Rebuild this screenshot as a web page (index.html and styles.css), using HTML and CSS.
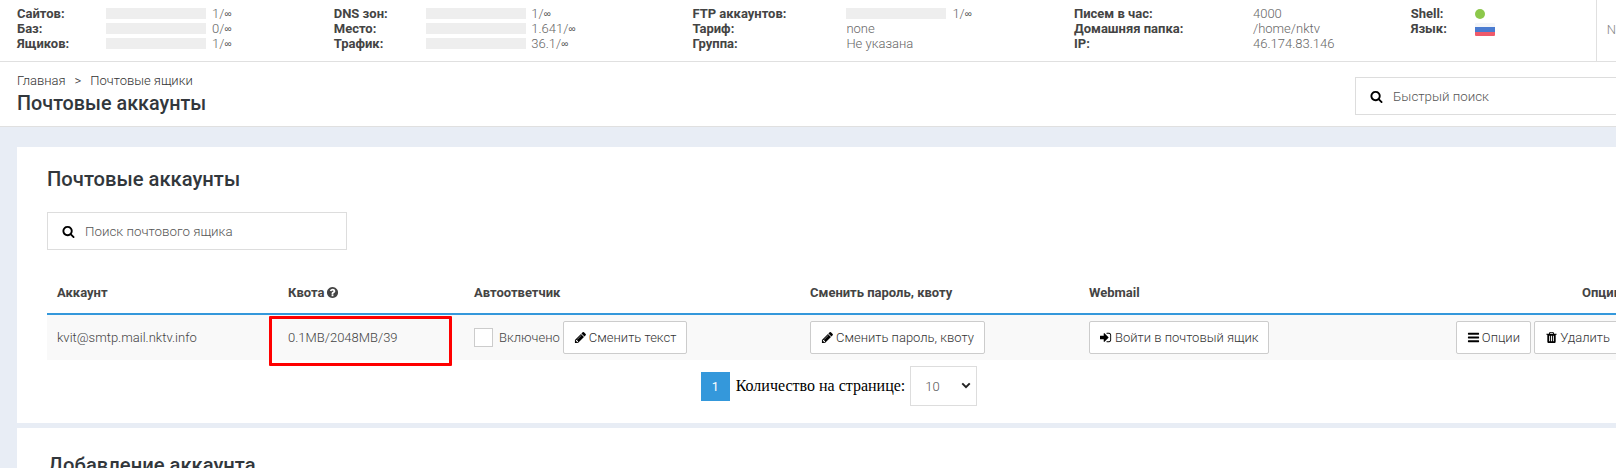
FILE: index.html
```html
<!DOCTYPE html>
<html>
  <head>
    <meta charset="UTF-8">
    <title>Почтовые аккаунты</title>
    <link rel="stylesheet" href="styles.css">
  </head>
  <body>
    <svg class="iconDefs" xmlns="http://www.w3.org/2000/svg">
      <symbol id="iSearch" viewBox="0 0 1792 1792"><path d="M1216 832q0-185-131.5-316.5t-316.5-131.5-316.5 131.5-131.5 316.5 131.5 316.5 316.5 131.5 316.5-131.5 131.5-316.5zm512 832q0 52-38 90t-90 38q-54 0-90-38l-343-342q-179 124-399 124-143 0-273.5-55.5t-225-150-150-225-55.5-273.5 55.5-273.5 150-225 225-150 273.5-55.5 273.5 55.5 225 150 150 225 55.5 273.5q0 220-124 399l343 343q37 37 37 90z"/></symbol>
      <symbol id="iPencil" viewBox="0 0 1792 1792"><path d="M491 1536l91-91-235-235-91 91v107h128v128h107zm523-928q0-22-22-22-10 0-17 7l-542 542q-7 7-7 17 0 22 22 22 10 0 17-7l542-542q7-7 7-17zm-54-192l416 416-832 832h-416v-416zm683 96q0 53-37 90l-166 166-416-416 166-165q36-38 90-38 53 0 91 38l235 234q37 39 37 91z"/></symbol>
      <symbol id="iSignIn" viewBox="0 0 1792 1792"><path d="M1184 896q0 26-19 45l-544 544q-19 19-45 19t-45-19-19-45v-288h-448q-26 0-45-19t-19-45v-384q0-26 19-45t45-19h448v-288q0-26 19-45t45-19 45 19l544 544q19 19 19 45zm352-352v704q0 119-84.5 203.5t-203.5 84.5h-320q-13 0-22.5-9.5t-9.5-22.5q0-4-1-20t-.5-26.5 3-23.5 10-19.5 20.5-6.5h320q66 0 113-47t47-113v-704q0-66-47-113t-113-47h-312l-11.5-1-11.5-3-8-5.5-7-9-2-13.5q0-4-1-20t-.5-26.5 3-23.5 10-19.5 20.5-6.5h320q119 0 203.5 84.5t84.5 203.5z"/></symbol>
      <symbol id="iBars" viewBox="0 0 1792 1792"><path d="M1664 1344v128q0 26-19 45t-45 19h-1408q-26 0-45-19t-19-45v-128q0-26 19-45t45-19h1408q26 0 45 19t19 45zm0-512v128q0 26-19 45t-45 19h-1408q-26 0-45-19t-19-45v-128q0-26 19-45t45-19h1408q26 0 45 19t19 45zm0-512v128q0 26-19 45t-45 19h-1408q-26 0-45-19t-19-45v-128q0-26 19-45t45-19h1408q26 0 45 19t19 45z"/></symbol>
      <symbol id="iTrash" viewBox="0 0 1792 1792"><path d="M704 1376v-704q0-14-9-23t-23-9h-64q-14 0-23 9t-9 23v704q0 14 9 23t23 9h64q14 0 23-9t9-23zm256 0v-704q0-14-9-23t-23-9h-64q-14 0-23 9t-9 23v704q0 14 9 23t23 9h64q14 0 23-9t9-23zm256 0v-704q0-14-9-23t-23-9h-64q-14 0-23 9t-9 23v704q0 14 9 23t23 9h64q14 0 23-9t9-23zm-544-992h448l-48-117q-7-9-17-11h-317q-10 2-17 11zm928 32v64q0 14-9 23t-23 9h-96v948q0 83-47 143.5t-113 60.5h-832q-66 0-113-58.5t-47-141.5v-952h-96q-14 0-23-9t-9-23v-64q0-14 9-23t23-9h309l70-167q15-37 54-63t79-26h320q40 0 79 26t54 63l70 167h309q14 0 23 9t9 23z"/></symbol>
      <symbol id="iQuestion" viewBox="0 0 1792 1792"><path d="M1024 1376v-192q0-14-9-23t-23-9h-192q-14 0-23 9t-9 23v192q0 14 9 23t23 9h192q14 0 23-9t9-23zm256-672q0-88-55.5-163t-138.5-116-170-41q-243 0-371 213-15 24 8 42l132 100q7 6 19 6 16 0 25-12 53-68 86-92 34-24 86-24 48 0 85.5 26t37.5 59q0 38-20 61t-68 45q-63 28-115.5 86.5t-52.5 125.5v36q0 14 9 23t23 9h192q14 0 23-9t9-23q0-19 21.5-49.5t54.5-49.5q32-18 49-28.5t46-35 44.5-48 28-60.5 12.5-81zm384 192q0 209-103 385.5t-279.5 279.5-385.5 103-385.5-103-279.5-279.5-103-385.5 103-385.5 279.5-279.5 385.5-103 385.5 103 279.5 279.5 103 385.5z"/></symbol>
    </svg>

    <div class="statBar">
      <div class="statGroup statGroupSites">
        <b>Сайтов:</b><span class="statValue"><i class="statTrack"></i>1/<em class="inf">∞</em></span>
        <b>Баз:</b><span class="statValue"><i class="statTrack"></i>0/<em class="inf">∞</em></span>
        <b>Ящиков:</b><span class="statValue"><i class="statTrack"></i>1/<em class="inf">∞</em></span>
      </div>
      <div class="statGroup statGroupDns">
        <b>DNS зон:</b><span class="statValue"><i class="statTrack"></i>1/<em class="inf">∞</em></span>
        <b>Место:</b><span class="statValue"><i class="statTrack"></i>1.641/<em class="inf">∞</em></span>
        <b>Трафик:</b><span class="statValue"><i class="statTrack"></i>36.1/<em class="inf">∞</em></span>
      </div>
      <div class="statGroup statGroupFtp">
        <b>FTP аккаунтов:</b><span class="statValue"><i class="statTrack"></i>1/<em class="inf">∞</em></span>
        <b>Тариф:</b><span class="statValue">none</span>
        <b>Группа:</b><span class="statValue">Не указана</span>
      </div>
      <div class="statGroup statGroupMail">
        <b>Писем в час:</b><span class="statValue">4000</span>
        <b>Домашняя папка:</b><span class="statValue">/home/nktv</span>
        <b>IP:</b><span class="statValue">46.174.83.146</span>
      </div>
      <div class="statGroup statGroupShell">
        <b>Shell:</b><span class="statValue"><i class="shellDot"></i></span>
        <b>Язык:</b><span class="statValue"><i class="flagRu"></i></span>
      </div>
      <div class="statUser">N</div>
    </div>

    <div class="pageHead">
      <div>
        <div class="crumbs">Главная<span class="crumbSep">&gt;</span>Почтовые ящики</div>
        <h1 class="pageTitle">Почтовые аккаунты</h1>
      </div>
      <label class="searchBox quickSearch">
        <svg class="icon searchIcon"><use href="#iSearch"/></svg>
        <input type="text" placeholder="Быстрый поиск">
      </label>
    </div>

    <div class="content">
      <div class="card">
        <h2 class="cardTitle">Почтовые аккаунты</h2>
        <label class="searchBox mailSearch">
          <svg class="icon searchIcon"><use href="#iSearch"/></svg>
          <input type="text" placeholder="Поиск почтового ящика">
        </label>

        <table class="mailTable">
          <thead>
            <tr>
              <th class="colAccount">Аккаунт</th>
              <th class="colQuota">Квота <svg class="icon helpIcon"><use href="#iQuestion"/></svg></th>
              <th class="colReply">Автоответчик</th>
              <th class="colPass">Сменить пароль, квоту</th>
              <th class="colMail">Webmail</th>
              <th class="colOptions">Опции</th>
            </tr>
          </thead>
          <tbody>
            <tr>
              <td>kvit@smtp.mail.nktv.info</td>
              <td class="quotaCell">0.1MB/2048MB/39<div class="redMark"></div></td>
              <td>
                <div class="replyCell">
                  <input type="checkbox" class="check"> <span>Включено</span>
                  <button class="button"><svg class="icon"><use href="#iPencil"/></svg>Сменить текст</button>
                </div>
              </td>
              <td><button class="button"><svg class="icon"><use href="#iPencil"/></svg>Сменить пароль, квоту</button></td>
              <td><button class="button"><svg class="icon"><use href="#iSignIn"/></svg>Войти в почтовый ящик</button></td>
              <td class="optionsCell">
                <button class="button"><svg class="icon"><use href="#iBars"/></svg>Опции</button>
                <button class="button"><svg class="icon"><use href="#iTrash"/></svg>Удалить</button>
              </td>
            </tr>
          </tbody>
        </table>

        <div class="pager">
          <span class="pageNum">1</span>
          <span class="pagerLabel">Количество на странице:</span>
          <div class="pagerSelectWrap">
            <select class="pagerSelect"><option>10</option><option>25</option><option>50</option></select>
            <svg class="pagerArrow" viewBox="0 0 12 8"><polyline points="1.5,1.5 6,6 10.5,1.5"/></svg>
          </div>
        </div>
      </div>

      <div class="card cardNext">
        <h2 class="cardTitle">Добавление аккаунта</h2>
      </div>
    </div>
  </body>
</html>
```

FILE: styles.css
```css
* {
  box-sizing: border-box;
}

html, body {
  height: 468px;
  overflow: hidden;
}

body {
  margin: 0;
  width: 1616px;
  background-color: #e8edf5;
  font-family: Roboto, "Liberation Sans", sans-serif;
  font-size: 13px;
  color: #444;
}

.iconDefs {
  display: none;
}

.icon {
  width: 14px;
  height: 14px;
  fill: #000;
  flex: none;
}

/* top stats */
.statBar {
  display: flex;
  height: 62px;
  padding: 6px 0 0 17px;
  background-color: #fff;
  border-bottom: 1px solid #e0e0e0;
  font-size: 13px;
  line-height: 15px;
}

.statGroup {
  display: grid;
  align-content: start;
}

.statGroup b {
  font-weight: 700;
}

.statGroupSites { width: 317.5px; grid-template-columns: 89px 1fr; }
.statGroupDns { width: 359.5px; grid-template-columns: 92.5px 1fr; }
.statGroupFtp { width: 382.5px; grid-template-columns: 154px 1fr; }
.statGroupMail { width: 337.5px; grid-template-columns: 179px 1fr; }
.statGroupShell { width: 185.5px; grid-template-columns: 64px 1fr; }

.statValue {
  display: flex;
  align-items: center;
  color: #666;
  font-weight: 300;
  white-space: nowrap;
}

.inf {
  font-family: "Liberation Sans", sans-serif;
  font-style: normal;
  font-weight: 400;
  font-size: 10px;
  color: #555;
}

.statTrack {
  width: 100px;
  height: 11px;
  margin-right: 6px;
  background-color: #eee;
}

.statGroupDns .statTrack {
  margin-right: 5px;
}

.shellDot {
  width: 10px;
  height: 10px;
  border-radius: 50%;
  background-color: #8cc84b;
}

.flagRu {
  width: 20px;
  height: 13px;
  margin-top: 1px;
  border-radius: 1px;
  background: linear-gradient(#f3f5f9 0 33%, #4a7bd0 33% 66%, #ef5a6b 66%);
}

.statUser {
  flex: 1;
  height: 61px;
  margin-top: -6px;
  padding: 22px 0 0 10px;
  border-left: 1px solid #e0e0e0;
  color: #888;
  font-weight: 300;
}

/* page head */
.pageHead {
  display: flex;
  justify-content: space-between;
  height: 65px;
  padding: 11px 0 0 17px;
  background-color: #fff;
  border-bottom: 1px solid #e0e0e0;
}

.crumbs {
  font-size: 13px;
  line-height: 16px;
  font-weight: 300;
  color: #333;
}

.crumbSep {
  margin: 0 9px;
}

.pageTitle {
  margin: 3px 0 0;
  font-size: 19.8px;
  line-height: 24px;
  font-weight: 500;
  color: #32373c;
}

.searchBox {
  display: flex;
  align-items: center;
  height: 38px;
  border: 1px solid #ddd;
  background-color: #fff;
}

.searchBox input {
  flex: 1;
  min-width: 0;
  border: none;
  outline: none;
  padding: 0;
  font-family: inherit;
  font-size: 13.33px;
  font-weight: 300;
  background: none;
}

.searchBox input::placeholder {
  color: #555;
}

.searchIcon {
  width: 13px;
  height: 13px;
  margin: 0 10px 0 14px;
}

.quickSearch {
  width: 270px;
  margin: 4px -9px 0 0;
}

/* cards */
.content {
  padding: 20px 0 0 17px;
}

.card {
  width: 1640px;
  height: 276px;
  padding: 20px 0 0 30px;
  background-color: #fff;
}

.cardNext {
  margin-top: 5px;
  padding-left: 31px;
  padding-top: 25px;
}

.cardTitle {
  margin: 0;
  font-size: 20.2px;
  line-height: 24px;
  font-weight: 500;
  color: #32373c;
}

.mailSearch {
  width: 300px;
  margin-top: 21px;
}

/* table */
.mailTable {
  width: 1584px;
  margin-top: 22px;
  table-layout: fixed;
  border-collapse: collapse;
  font-size: 13px;
}

.mailTable th {
  height: 42px;
  padding: 0 10px;
  text-align: left;
  font-weight: 700;
  font-size: 13px;
  border-bottom: 2px solid #3498db;
}

.colAccount { width: 231px; }
.colQuota { width: 186px; }
.colReply { width: 336px; }
.colPass { width: 279px; }
.colMail { width: 352px; }
.mailTable th.colOptions { text-align: right; }

.helpIcon {
  width: 13px;
  height: 13px;
  margin-left: -2px;
  fill: #444;
  vertical-align: -2px;
}

.mailTable td {
  height: 46px;
  padding: 0 10px;
  background-color: #f9f9f9;
  font-weight: 300;
  white-space: nowrap;
}

.quotaCell {
  position: relative;
}

.redMark {
  position: absolute;
  left: -9px;
  top: 1px;
  width: 183px;
  height: 50px;
  border: 3px solid #f00;
  border-radius: 1px;
}

.replyCell {
  display: flex;
  align-items: center;
}

.check {
  appearance: none;
  width: 19px;
  height: 19px;
  margin: 0 6px 0 0;
  border: 1px solid #ccc;
  background-color: #fff;
}

.replyCell .button {
  margin-left: 3px;
}

.button {
  display: inline-flex;
  align-items: center;
  gap: 2px;
  height: 33px;
  padding: 0 10px;
  border: 1px solid #ccc;
  border-radius: 2px;
  background-color: #fff;
  font-family: inherit;
  font-size: 13px;
  font-weight: 300;
  color: #333;
  cursor: pointer;
}

.button .icon {
  width: 13px;
  height: 13px;
}

.optionsCell {
  text-align: right;
}

/* pagination */
.pager {
  display: flex;
  justify-content: center;
  align-items: center;
  width: 1584px;
  margin-top: 6px;
  font-family: "Liberation Serif", serif;
  font-size: 16px;
  color: #000;
}

.pageNum {
  width: 29px;
  height: 29px;
  line-height: 29px;
  text-align: center;
  background-color: #3498db;
  color: #fff;
  font-family: Roboto, sans-serif;
  font-size: 12.5px;
}

.pagerLabel {
  margin: 0 5px 0 6px;
}

.pagerSelectWrap {
  position: relative;
  display: flex;
}

.pagerSelect {
  appearance: none;
  width: 67px;
  height: 40px;
  padding-left: 14px;
  border: 1px solid #ddd;
  border-radius: 0;
  background-color: #fff;
  font-family: Roboto, sans-serif;
  font-size: 13px;
  font-weight: 300;
  color: #555;
  outline: none;
}

.pagerArrow {
  position: absolute;
  right: 6px;
  top: 16px;
  width: 10px;
  height: 7px;
  fill: none;
  stroke: #222;
  stroke-width: 2.4;
  pointer-events: none;
}
```
